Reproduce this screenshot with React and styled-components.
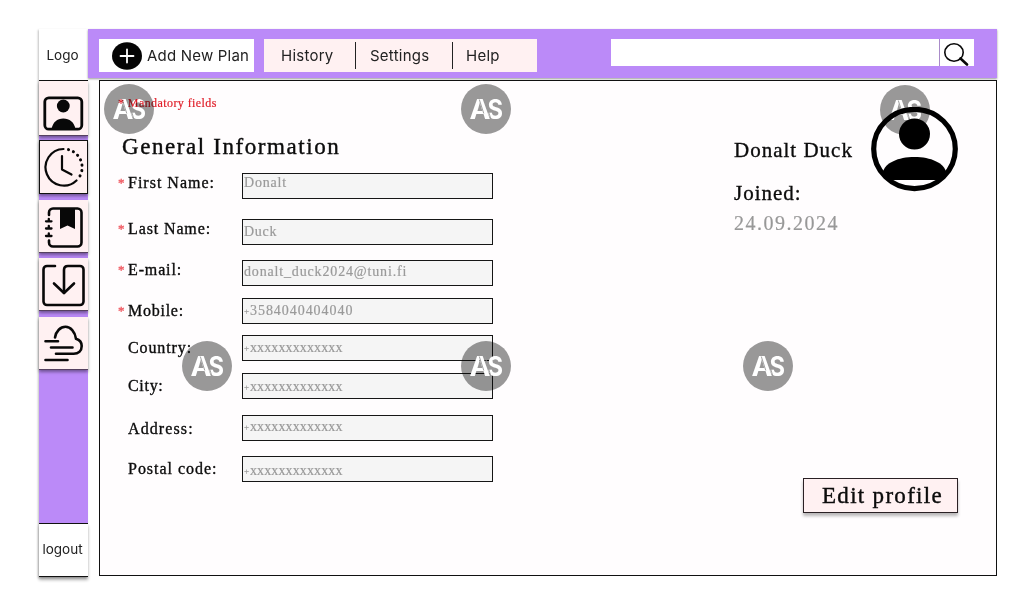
import React from "react";
import styled, { createGlobalStyle } from "styled-components";

const Global = createGlobalStyle`
  * { box-sizing: border-box; }
  body { margin: 0; background: #fff; }
`;

const serif = `"Liberation Serif", "Times New Roman", serif`;
const sans = `Inter, "Liberation Sans", sans-serif`;

const Page = styled.div`
  width: 1024px;
  height: 603px;
  padding: 29px 27px 26px 39px;
  display: flex;
  background: #fff;
  overflow: hidden;
  font-family: ${sans};
  color: #222;
`;

const Sidebar = styled.nav`
  width: 49px;
  height: 548px;
  flex: none;
  display: flex;
  flex-direction: column;
  background: #bb8af8;
  box-shadow: -1px 1px 2px rgba(0, 0, 0, 0.25);
`;

const LogoCell = styled.div`
  height: 52px;
  flex: none;
  display: flex;
  align-items: center;
  justify-content: center;
  padding-right: 2px;
  background: #fff;
  border-bottom: 1px solid #111;
  font-size: 13.5px;
`;

const NavItem = styled.button`
  width: 49px;
  height: ${(p) => p.$h}px;
  margin: ${(p) => p.$gap}px 0 0;
  flex: none;
  padding: ${(p) => p.$top || 0}px 0 0;
  display: flex;
  align-items: center;
  justify-content: center;
  background: #fff1f2;
  border: solid #111;
  border-width: ${(p) => (p.$active ? "1px" : "0")};
  border-bottom: 1px solid ${(p) => (p.$active ? "#111" : "#554060")};
  box-shadow: 0 2px 3px rgba(0, 0, 0, 0.4);
  svg { display: block; flex: none; }
`;

const Logout = styled.button`
  width: 49px;
  height: 54px;
  margin-top: auto;
  padding: 0 2px 2px 0;
  flex: none;
  background: #fff;
  border: 0 solid #111;
  border-width: 1px 0;
  box-shadow: 0 3px 3px rgba(0, 0, 0, 0.3);
  font: 13.5px ${sans};
  color: #222;
`;

const Main = styled.div`
  width: 909px;
  flex: none;
  display: flex;
  flex-direction: column;
`;

const TopBar = styled.header`
  height: 49px;
  flex: none;
  display: flex;
  align-items: flex-start;
  padding: 10px 23px 0 11px;
  background: #bb8af8;
  box-shadow: 0 1px 2px rgba(0, 0, 0, 0.4);
`;

const AddPlan = styled.button`
  width: 155px;
  height: 33px;
  padding: 0 0 0 13px;
  display: flex;
  align-items: center;
  gap: 5px;
  border: 0;
  background: #fff;
  color: #222;
  font: 15px ${sans};
  letter-spacing: 0.2px;
  white-space: nowrap;
`;

const Menu = styled.div`
  width: 273px;
  height: 33px;
  margin-left: 10px;
  display: flex;
  align-items: center;
  background: #fff1f2;
`;

const MenuItem = styled.a`
  width: ${(p) => p.$w}px;
  height: 27px;
  padding-left: ${(p) => p.$pad}px;
  display: flex;
  align-items: center;
  border-right: ${(p) => (p.$last ? "0" : "1px solid #222")};
  font-size: 15px;
  letter-spacing: 0.25px;
`;

const Search = styled.div`
  width: 363px;
  height: 27px;
  margin-left: auto;
  display: flex;
  justify-content: flex-end;
  background: #fff;
`;

const SearchButton = styled.button`
  width: 35px;
  height: 27px;
  padding: 0;
  border: 0;
  border-left: 1px solid #a98bc9;
  background: #fff;
  svg { display: block; margin-left: 4px; }
`;

const Panel = styled.main`
  position: relative;
  width: 898px;
  height: 496px;
  margin: 2px 0 0 11px;
  display: flex;
  justify-content: space-between;
  border: 1px solid #111;
  background: #fffdfe;
  font-family: ${serif};
  color: #0c0c0c;
`;

const FormSide = styled.form`
  padding: 14px 0 0 18px;
  display: flex;
  flex-direction: column;
`;

const Note = styled.p`
  position: relative;
  z-index: 1;
  margin: 0;
  height: 16px;
  font-size: 12px;
  line-height: 16px;
  letter-spacing: 0.42px;
  color: #e0202a;
  -webkit-text-stroke: 0.2px #e0202a;
  mix-blend-mode: multiply;
`;

const Title = styled.h1`
  margin: 21px 0 0 4px;
  height: 30px;
  font-size: 23px;
  line-height: 30px;
  font-weight: 400;
  letter-spacing: 1.58px;
  -webkit-text-stroke: 0.4px #0c0c0c;
`;

const Row = styled.div`
  height: 26px;
  margin-top: ${(p) => p.$gap}px;
  display: flex;
`;

const Label = styled.label`
  width: 124px;
  height: 26px;
  margin-top: ${(p) => p.$dy}px;
  display: flex;
  font-size: 16px;
  line-height: 26px;
  letter-spacing: ${(p) => p.$ls}px;
  -webkit-text-stroke: 0.35px #0c0c0c;
`;

const Star = styled.span`
  width: 10px;
  flex: none;
  font-size: 13px;
  letter-spacing: 0;
  color: #f06068;
  -webkit-text-stroke: 0.4px #f06068;
`;

const Field = styled.div`
  width: 251px;
  height: 26px;
  padding-left: 1px;
  border: 1px solid #161616;
  background: #f5f5f5;
`;

const Value = styled.div`
  height: 24px;
  margin-top: ${(p) => p.$dy}px;
  display: flex;
  align-items: center;
  font-size: 14px;
  line-height: 24px;
  letter-spacing: ${(p) => p.$ls}px;
  color: #9a9a9a;
  -webkit-text-stroke: 0.2px #9a9a9a;
`;

const Plus = styled.span`
  width: 6px;
  font-size: 9px;
  letter-spacing: 0;
`;

const ProfileSide = styled.section`
  width: 263px;
  padding: 26px 38px 0 0;
  display: flex;
  flex-direction: column;
`;

const Identity = styled.div`
  display: flex;
  justify-content: space-between;
  svg { position: relative; z-index: 2; display: block; }
`;

const Person = styled.div`
  padding: 28px 0 0 1px;
  font-size: 21px;
  line-height: 30px;
  letter-spacing: 1px;
  white-space: nowrap;
  -webkit-text-stroke: 0.35px #0c0c0c;
`;

const Joined = styled.div`
  margin-top: 13px;
`;

const JoinDate = styled.div`
  font-size: 20px;
  letter-spacing: 1.5px;
  color: #989898;
  -webkit-text-stroke: 0.2px #989898;
`;

const EditButton = styled.button`
  width: 155px;
  height: 35px;
  margin: auto 0 62px auto;
  padding: 0 0 0 4px;
  border: 1px solid #2a2024;
  background: #fff1f2;
  box-shadow: 0 3px 3px rgba(0, 0, 0, 0.28);
  font: 23px ${serif};
  letter-spacing: 1.3px;
  font-variant-ligatures: none;
  color: #0c0c0c;
  white-space: nowrap;
  -webkit-text-stroke: 0.4px #0c0c0c;
`;

const Badge = styled.svg`
  position: absolute;
  left: ${(p) => p.$x}px;
  top: ${(p) => p.$y}px;
  width: 50px;
  height: 50px;
  pointer-events: none;
`;

const stroke = { fill: "none", stroke: "#080808", strokeLinecap: "round", strokeLinejoin: "round" };

const Monogram = ({ x, y }) => (
  <Badge viewBox="0 0 50 50" $x={x} $y={y}>
    <circle cx="25" cy="25" r="25" fill="#000" fillOpacity=".4" />
    <g fill="#fff" fontFamily="Inter, sans-serif" fontWeight="700">
      <text x="8.5" y="34.8" fontSize="26.5" textLength="21" lengthAdjust="spacingAndGlyphs">A</text>
      <text x="26.5" y="34.8" fontSize="26.5" textLength="15.5" lengthAdjust="spacingAndGlyphs">S</text>
    </g>
    <path d="M24 15.5l5.800 19.500M18.300 15.500l4.500 14" stroke="#999" strokeWidth=".9" />
  </Badge>
);

const ProfileIcon = () => (
  <svg width="41" height="35" viewBox="0 0 41 35">
    <rect x="1.8" y="1.8" width="37" height="31.4" rx="4" {...stroke} strokeWidth="2.8" />
    <circle cx="20.3" cy="10" r="6.4" fill="#080808" />
    <path d="M8.5 33C10 26 14 22.5 20.3 22.5S31 26 32.5 33z" fill="#080808" />
  </svg>
);

const ClockIcon = () => (
  <svg width="41" height="41" viewBox="0 0 41 41" {...stroke} strokeWidth="2.2">
    <path d="M20.5 2A18.3 18.3 0 1 0 33.5 33.5" />
    <path d="M25.5 2.6A18.3 18.3 0 0 1 36 30.5" strokeDasharray="0.1 5.3" strokeWidth="3" />
    <path d="M19 9v13.5l9.5 5" />
  </svg>
);

const NotebookIcon = () => (
  <svg width="39" height="41" viewBox="0 0 39 41" {...stroke} strokeWidth="2.6">
    <path d="M5 8V5.5A4 4 0 0 1 9 1.5h24.5a4 4 0 0 1 4 4v30a4 4 0 0 1-4 4H9a4 4 0 0 1-4-4v-2" />
    <path d="M2 14.3h5.5M2 21.5h5.5M2 29h5.5M4.8 12v2.3M4.8 19v2.5M4.8 26.5V29" strokeWidth="2.3" />
    <path d="M16 1.5h15V22l-7.5-3.6L16 22z" fill="#080808" stroke="none" />
  </svg>
);

const DownloadIcon = () => (
  <svg width="43" height="43" viewBox="0 0 43 43" {...stroke} strokeWidth="2.6">
    <path d="M13 2H5a3.5 3.5 0 0 0-3.5 3.5v32A3.5 3.5 0 0 0 5 41h33a3.5 3.5 0 0 0 3.5-3.5v-32A3.5 3.5 0 0 0 38 2H26q-4 0-4 4v23" />
    <path d="M12 19.5l10 9.500L32 19.5" />
  </svg>
);

const CloudIcon = () => (
  <svg width="39" height="37" viewBox="0 0 39 37" {...stroke} strokeWidth="2.6">
    <path d="M11 12.5C12 6 16.5 1.8 21.5 1.8S31 6.5 32 13.7C35.5 14.7 37.7 17 37.7 21c0 5-3.5 7.7-8 7.700H12" />
    <path d="M1.5 16.3h12.5M7 22.5H28.5M1.5 35h22" />
  </svg>
);

const PlusIcon = () => (
  <svg width="30" height="28" viewBox="0 0 30 28">
    <ellipse cx="15" cy="14" rx="15" ry="13.8" fill="#050505" />
    <path d="M8.5 14h13M15 7.5v13" stroke="#fff" strokeWidth="1.8" strokeLinecap="round" />
  </svg>
);

const SearchIcon = () => (
  <svg width="28" height="27" viewBox="0 0 28 27" {...stroke}>
    <ellipse cx="10" cy="13.5" rx="9.2" ry="8.7" strokeWidth="1.6" />
    <path d="M16.5 19.5l6.5 6" strokeWidth="2.6" />
  </svg>
);

const Avatar = () => (
  <svg width="87" height="85" viewBox="0 0 87 85">
    <ellipse cx="43.5" cy="42" rx="40.8" ry="39.6" fill="none" stroke="#000" strokeWidth="5.2" />
    <circle cx="43.5" cy="27" r="15.5" fill="#000" />
    <path d="M12 65C14 56 27 50 43.5 50S73 56 75 65L68.5 73H18.5z" fill="#000" />
  </svg>
);

const fields = [
  { label: "First Name:", ls: 1, req: true, gap: 11, dy: -3, value: "Donalt", vls: 0.8, vdy: -3 },
  { label: "Last Name:", ls: 0.88, req: true, gap: 20, dy: -3, value: "Duck", vls: 0.7, vdy: 0 },
  { label: "E-mail:", ls: 0.86, req: true, gap: 15, dy: -3, value: "donalt_duck2024@tuni.fi", vls: 0.84, vdy: -1 },
  { label: "Mobile:", ls: 0.75, req: true, gap: 12, dy: 0, plus: true, value: "3584040404040", vls: 0.95, vdy: 0 },
  { label: "Country:", ls: 0.9, gap: 11, dy: 0, plus: true, value: "xxxxxxxxxxxxx", vls: 0.12, vdy: 0 },
  { label: "City:", ls: 0.7, gap: 12, dy: 0, plus: true, value: "xxxxxxxxxxxxx", vls: 0.12, vdy: 1 },
  { label: "Address:", ls: 1.1, gap: 16, dy: 1, plus: true, value: "xxxxxxxxxxxxx", vls: 0.12, vdy: -1 },
  { label: "Postal code:", ls: 0.98, gap: 15, dy: 0, plus: true, value: "xxxxxxxxxxxxx", vls: 0.12, vdy: 2 },
];

const marks = [[4, 3], [361, 3], [780, 4], [82, 260], [361, 260], [643, 260]];

export default function App() {
  return (
    <Page>
      <Global />
      <Sidebar>
        <LogoCell>Logo</LogoCell>
        <NavItem $h={55} $gap={0} $top={11}><ProfileIcon /></NavItem>
        <NavItem $h={54} $gap={4} $active><ClockIcon /></NavItem>
        <NavItem $h={53} $gap={6} $top={2}><NotebookIcon /></NavItem>
        <NavItem $h={53} $gap={5} $top={2}><DownloadIcon /></NavItem>
        <NavItem $h={53} $gap={6}><CloudIcon /></NavItem>
        <Logout>logout</Logout>
      </Sidebar>
      <Main>
        <TopBar>
          <AddPlan><PlusIcon />Add New Plan</AddPlan>
          <Menu>
            <MenuItem $w={92} $pad={17}>History</MenuItem>
            <MenuItem $w={97} $pad={14}>Settings</MenuItem>
            <MenuItem $w={84} $pad={13} $last>Help</MenuItem>
          </Menu>
          <Search>
            <SearchButton><SearchIcon /></SearchButton>
          </Search>
        </TopBar>
        <Panel>
          <FormSide>
            <Note>* Mandatory fields</Note>
            <Title>General Information</Title>
            {fields.map((f) => (
              <Row key={f.label} $gap={f.gap}>
                <Label $dy={f.dy} $ls={f.ls}>
                  <Star>{f.req ? "*" : ""}</Star>
                  {f.label}
                </Label>
                <Field>
                  <Value $ls={f.vls} $dy={f.vdy}>
                    {f.plus && <Plus>+</Plus>}
                    {f.value}
                  </Value>
                </Field>
              </Row>
            ))}
          </FormSide>
          <ProfileSide>
            <Identity>
              <Person>
                Donalt Duck
                <Joined>Joined:</Joined>
                <JoinDate>24.09.2024</JoinDate>
              </Person>
              <Avatar />
            </Identity>
            <EditButton>Edit profile</EditButton>
          </ProfileSide>
          {marks.map(([x, y]) => <Monogram key={`${x}-${y}`} x={x} y={y} />)}
        </Panel>
      </Main>
    </Page>
  );
}
